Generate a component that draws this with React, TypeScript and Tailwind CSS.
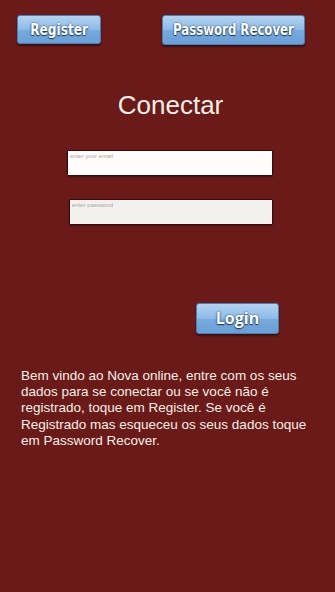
import React from 'react';

const glossy =
  'relative overflow-hidden rounded-[3px] border border-[#4a7fb8] bg-gradient-to-b from-[#b3d3f1] via-[#8dbbe7] to-[#6aa0d7] shadow-[0_2px_2px_rgba(0,0,0,0.45)] text-white font-bold';

function GlossyButton({ label, className, textClass }: { label: string; className: string; textClass: string }) {
  return (
    <button className={`${glossy} ${className}`}>
      <span className="absolute inset-x-0 bottom-0 h-1/2 bg-[#6b9fd5]/60" />
      <span className={`relative inline-block [text-shadow:0_1px_1px_#1d3a5c,0_0_2px_#1d3a5c] ${textClass}`}>{label}</span>
    </button>
  );
}

export default function App() {
  return (
    <div className="min-h-[592px] w-full bg-[#6b1a1a] font-['Liberation_Sans',Arial,sans-serif]">
      <div className="flex items-start pl-[17px] pt-[15px]">
        <GlossyButton
          label="Register"
          className="h-[29px] w-[84px]"
          textClass="font-['DejaVu_Sans_Condensed',sans-serif] text-[15px] scale-x-[0.9]"
        />
        <GlossyButton
          label="Password Recover"
          className="ml-[61px] h-[30px] w-[143px]"
          textClass="font-['DejaVu_Sans_Condensed',sans-serif] text-[15px] whitespace-nowrap scale-x-[0.87]"
        />
      </div>

      <h1 className="mt-[45px] pl-[6px] text-center text-[26px] leading-[30px] text-[#f6efe6]">Conectar</h1>

      <div className="mt-[30px] flex flex-col">
        <input
          type="text"
          placeholder="enter your email"
          className="ml-[67px] h-[26px] w-[206px] rounded-[1px] border border-[#3a0a0a] bg-[#fffdfb] px-[2px] pb-[14px] text-[6px] leading-[8px] text-[#888] placeholder:text-[#a9a5a2] outline-none shadow-[0_1px_2px_rgba(0,0,0,0.4)]"
        />
        <input
          type="password"
          placeholder="enter password"
          className="ml-[69px] mt-[23px] h-[26px] w-[204px] rounded-[1px] border border-[#3a0a0a] bg-[#f3f1f0] px-[2px] pb-[14px] text-[6px] leading-[8px] text-[#888] placeholder:text-[#a9a5a2] outline-none shadow-[0_1px_2px_rgba(0,0,0,0.4)]"
        />
      </div>

      <div className="mt-[78px] pl-[196px]">
        <GlossyButton
          label="Login"
          className="h-[31px] w-[83px]"
          textClass="font-['Open_Sans',sans-serif] text-[16px]"
        />
      </div>

      <p className="mt-[34px] px-[21px] text-[13.5px] leading-[16.2px] text-[#f6efe6]">
        Bem vindo ao Nova online, entre com os seus dados para se conectar ou se você não é registrado, toque em
        Register. Se você é Registrado mas esqueceu os seus dados toque em Password Recover.
      </p>
    </div>
  );
}
